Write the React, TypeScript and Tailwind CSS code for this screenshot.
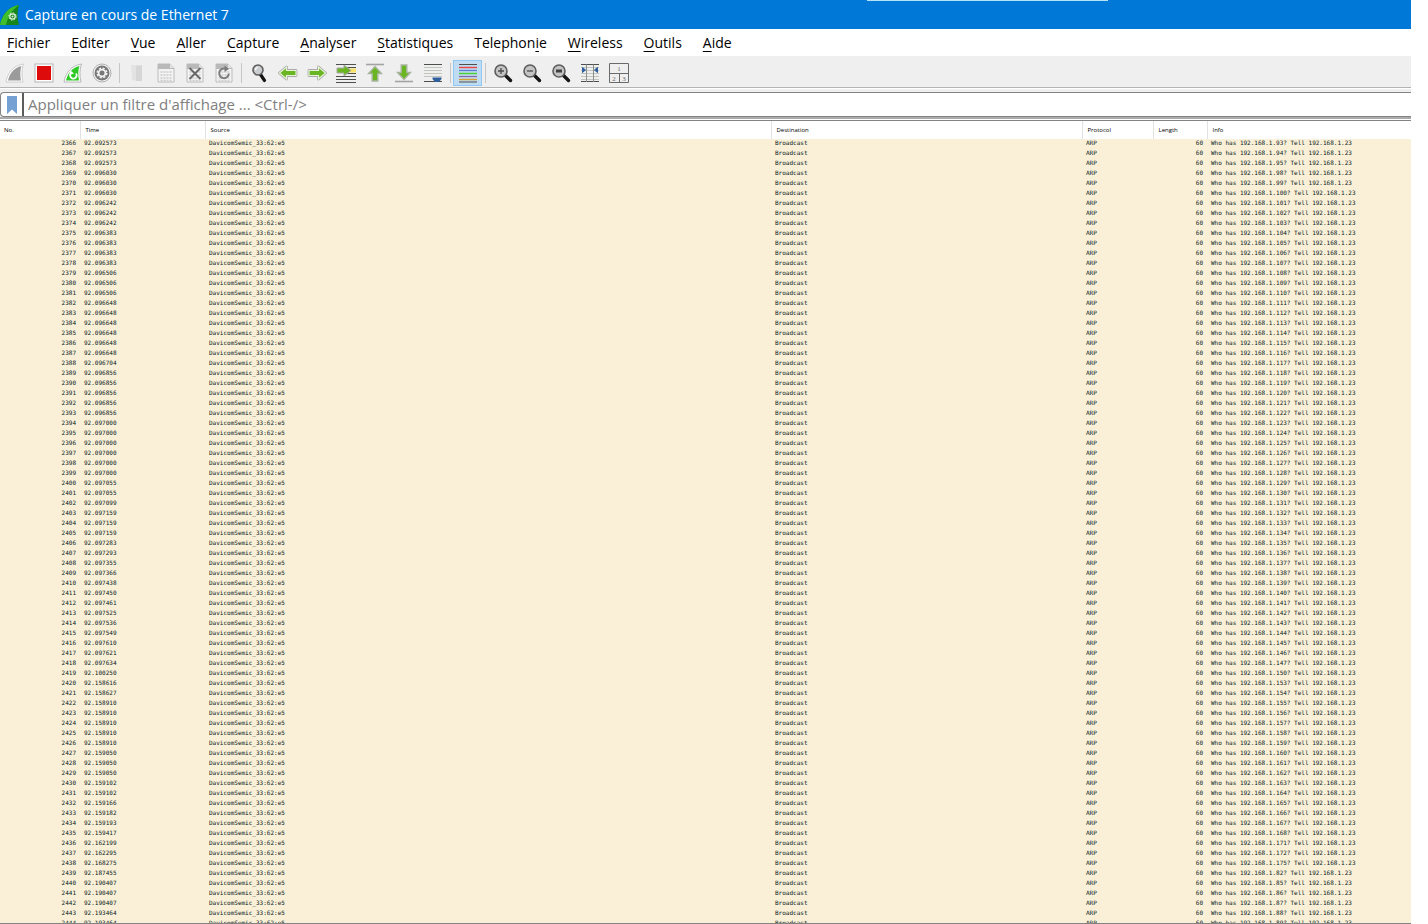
import type { ReactNode } from "react";
import clsx from "clsx";

interface MenuEntry {
  label: string;
  // index of the underlined access key
  key: number;
}

const MENUS: MenuEntry[] = [
  { label: "Fichier", key: 0 },
  { label: "Editer", key: 0 },
  { label: "Vue", key: 0 },
  { label: "Aller", key: 0 },
  { label: "Capture", key: 0 },
  { label: "Analyser", key: 0 },
  { label: "Statistiques", key: 0 },
  { label: "Telephonie", key: 8 },
  { label: "Wireless", key: 0 },
  { label: "Outils", key: 0 },
  { label: "Aide", key: 0 },
];

// [time, number of consecutive packets with that time]
const TIMES: [string, number][] = [
  ["92.092573", 3],
  ["92.096030", 3],
  ["92.096242", 3],
  ["92.096383", 4],
  ["92.096506", 3],
  ["92.096648", 6],
  ["92.096704", 1],
  ["92.096856", 5],
  ["92.097000", 6],
  ["92.097055", 2],
  ["92.097099", 1],
  ["92.097159", 3],
  ["92.097283", 1],
  ["92.097293", 1],
  ["92.097355", 1],
  ["92.097366", 1],
  ["92.097438", 1],
  ["92.097450", 1],
  ["92.097461", 1],
  ["92.097525", 1],
  ["92.097536", 1],
  ["92.097549", 1],
  ["92.097610", 1],
  ["92.097621", 1],
  ["92.097634", 1],
  ["92.100250", 1],
  ["92.158616", 1],
  ["92.158627", 1],
  ["92.158910", 5],
  ["92.159050", 3],
  ["92.159102", 2],
  ["92.159166", 1],
  ["92.159182", 1],
  ["92.159193", 1],
  ["92.159417", 1],
  ["92.162199", 1],
  ["92.162295", 1],
  ["92.168275", 1],
  ["92.187455", 1],
  ["92.190407", 3],
  ["92.193464", 2],
];

// ranges of scanned hosts, first to last
const HOSTS: [number, number][] = [
  [93, 95],
  [98, 147],
  [150, 150],
  [153, 168],
  [171, 172],
  [175, 175],
  [82, 82],
  [85, 89],
];

const times = TIMES.flatMap(([time, count]) => Array<string>(count).fill(time));
const hosts = HOSTS.flatMap(([from, to]) =>
  Array.from({ length: to - from + 1 }, (_, i) => from + i)
);
const packets = times.map((time, i) => ({ no: 2366 + i, time, host: hosts[i] }));

function Icon({ children }: { children: ReactNode }) {
  return (
    <svg viewBox="0 0 20 20" className="size-5" aria-hidden>
      {children}
    </svg>
  );
}

function Fin({ fill, edge }: { fill: string; edge: string }) {
  return (
    <>
      <path d="M1 19C2.500 10 8 2.500 18.500 1C16.500 6 16.500 13 18 19Z" fill="#fff" stroke={edge} strokeWidth="0.8" />
      <path d="M3 17.500C4.500 10.500 9 4.500 16.500 3C15 7 15 13 16 17.500Z" fill={fill} />
    </>
  );
}

function Sheet({ children }: { children: ReactNode }) {
  return (
    <Icon>
      <path d="M2 1H14L18 5V19H2Z" fill="#f3f3f3" stroke="#bcbcbc" />
      <path d="M2 1H14V5H18V6H2Z" fill="#b9b9b9" />
      <path d="M14 1V5H18Z" fill="#e4e4e4" />
      {children}
    </Icon>
  );
}

function SheetDots() {
  return <path d="M4.500 9H16M4.500 12H16M4.500 15H16M4.500 17.500H16" stroke="#cdcdcd" strokeWidth="1.500" strokeDasharray="2 1" />;
}

function Magnifier({ children }: { children?: ReactNode }) {
  return (
    <Icon>
      <path d="M12.500 12.500L17.500 17.500" stroke="#151515" strokeWidth="3.400" strokeLinecap="round" />
      <circle cx="8" cy="8" r="6" fill="#c4c4c4" stroke="#5d5d5d" strokeWidth="1.600" />
      {children}
    </Icon>
  );
}

const ARROW = "M1.500 10L8.500 4V7.500H18V12.500H8.500V16Z";

function Arrow({ turn }: { turn?: string }) {
  return (
    <g transform={turn}>
      <path d={ARROW} fill="#62b01e" stroke="#a9a9a9" strokeWidth="2.800" strokeLinejoin="round" />
      <path d={ARROW} fill="#6ab522" stroke="#e6f3d8" strokeWidth="1.200" />
    </g>
  );
}

function ToolButton({ label, active, children }: { label: string; active?: boolean; children: ReactNode }) {
  return (
    <button
      type="button"
      aria-label={label}
      title={label}
      className={clsx(
        "flex h-[26px] w-[29px] items-center justify-center",
        active && "border border-[#90c8f6] bg-[#c0dcf3]"
      )}
    >
      {children}
    </button>
  );
}

function Separator() {
  return (
    <div className="flex w-[6px] justify-center">
      <div className="h-5 w-px bg-[#c6c6c6]" />
    </div>
  );
}

function TitleBar() {
  return (
    <header className="flex h-[29px] items-center gap-[5px] bg-[#0078d7]">
      <svg viewBox="0 0 20 20" className="size-5" aria-hidden>
        <path d="M0 20C2 10 8 2 19 0C17 6 17 13 19 20Z" fill="#16851a" />
        <path d="M0 20C2 10 8 2 19 0C12 5 8 11 6 20Z" fill="#3fbf2b" />
        <circle cx="12.500" cy="11.500" r="2.700" fill="none" stroke="#e4f5e0" strokeWidth="1.200" />
        <circle cx="12.500" cy="11.500" r="3.700" fill="none" stroke="#e4f5e0" strokeWidth="1" strokeDasharray="1.400 1.500" />
        <circle cx="12.500" cy="11.500" r="1" fill="#e4f5e0" />
      </svg>
      <h1 className="text-[14px] text-white">Capture en cours de Ethernet 7</h1>
    </header>
  );
}

function MenuBar() {
  return (
    <nav className="flex h-[27px] items-center gap-[21px] bg-white pl-[7px]">
      {MENUS.map(({ label, key }) => (
        <button key={label} type="button" className="text-[14px] text-black">
          {label.slice(0, key)}
          <span className="underline underline-offset-3">{label[key]}</span>
          {label.slice(key + 1)}
        </button>
      ))}
    </nav>
  );
}

function ToolBar() {
  return (
    <div className="flex h-8 items-center border-b border-[#b4b4b4] bg-[#efefef] pt-[3px]" role="toolbar">
      <ToolButton label="Démarrer la capture">
        <Icon>
          <Fin fill="#9b9b9b" edge="#c4c4c4" />
        </Icon>
      </ToolButton>
      <ToolButton label="Arrêter la capture">
        <Icon>
          <rect x="1" y="1" width="18" height="18" fill="#fff" stroke="#b5b5b5" />
          <rect x="3" y="3" width="14" height="14" fill="#dd0b0b" />
        </Icon>
      </ToolButton>
      <ToolButton label="Redémarrer la capture">
        <Icon>
          <Fin fill="#2ec926" edge="#a9a9a9" />
          <path d="M7.500 11A3.200 3.200 0 1 0 13 10.500" fill="none" stroke="#fff" strokeWidth="1.700" />
          <path d="M6 12L7.500 7.500L11 10.500Z" fill="#fff" />
        </Icon>
      </ToolButton>
      <ToolButton label="Options de capture">
        <Icon>
          <circle cx="10" cy="10" r="9" fill="#f5f5f5" stroke="#b0b0b0" />
          <circle cx="10" cy="10" r="7.500" fill="#777" />
          <circle cx="10" cy="10" r="4.800" fill="none" stroke="#f2f2f2" strokeWidth="1.500" strokeDasharray="2.200 1.570" />
          <circle cx="10" cy="10" r="3.400" fill="none" stroke="#f2f2f2" strokeWidth="1.800" />
        </Icon>
      </ToolButton>
      <Separator />
      <ToolButton label="Ouvrir">
        <Icon>
          <path d="M4 2H10L15 4V18H10L5 17Z" fill="#e3e3e3" />
          <path d="M9 3L15 2V18H9Z" fill="#d6d6d6" />
        </Icon>
      </ToolButton>
      <ToolButton label="Enregistrer">
        <Sheet>
          <SheetDots />
        </Sheet>
      </ToolButton>
      <ToolButton label="Fermer">
        <Sheet>
          <SheetDots />
          <path d="M4.500 5L15.500 16M15.500 5L4.500 16" stroke="#686868" strokeWidth="2" />
        </Sheet>
      </ToolButton>
      <ToolButton label="Recharger">
        <Sheet>
          <SheetDots />
          <path d="M11.500 5.800A4.800 4.800 0 1 0 14.800 10.500" fill="none" stroke="#7c7c7c" strokeWidth="2" />
          <path d="M10.500 2.500L15 6L10.500 9Z" fill="#7c7c7c" />
        </Sheet>
      </ToolButton>
      <Separator />
      <ToolButton label="Trouver un paquet">
        <Icon>
          <path d="M11.500 11.500L15.500 17.500" stroke="#151515" strokeWidth="3.200" strokeLinecap="round" />
          <circle cx="9" cy="7" r="5" fill="#c9cdd0" stroke="#5d5d5d" strokeWidth="1.600" />
          <path d="M6.500 7A2.500 2.500 0 0 1 9 4.500" fill="none" stroke="#fff" strokeWidth="1.200" />
        </Icon>
      </ToolButton>
      <ToolButton label="Paquet précédent">
        <Icon>
          <Arrow />
        </Icon>
      </ToolButton>
      <ToolButton label="Paquet suivant">
        <Icon>
          <Arrow turn="rotate(180 10 10)" />
        </Icon>
      </ToolButton>
      <ToolButton label="Aller au paquet">
        <Icon>
          <path d="M0 1.500H20M0 13.500H20M0 16.500H20M0 19.500H20" stroke="#4c4f4c" />
          <path d="M11 4.500H20M11 10.500H20" stroke="#4c4f4c" />
          <rect x="12" y="5.500" width="8" height="4" fill="#f7e36a" />
          <path d="M1 5H8V2L15 7.500L8 13V10H1Z" fill="#6ab522" stroke="#a9a9a9" />
        </Icon>
      </ToolButton>
      <ToolButton label="Premier paquet">
        <Icon>
          <path d="M1 1.500H19" stroke="#a3a3a3" strokeWidth="1.600" />
          <path d="M10 3.500L16.500 10.500H12.800V18H7.200V10.500H3.500Z" fill="#6ab522" stroke="#a9b5a0" strokeWidth="1.400" />
        </Icon>
      </ToolButton>
      <ToolButton label="Dernier paquet">
        <Icon>
          <path d="M1 18.500H19" stroke="#a3a3a3" strokeWidth="1.600" />
          <path d="M10 16.500L16.500 9.500H12.800V2H7.200V9.500H3.500Z" fill="#6ab522" stroke="#a9b5a0" strokeWidth="1.400" />
        </Icon>
      </ToolButton>
      <ToolButton label="Défilement automatique">
        <Icon>
          <path d="M1 1.500H19M1 18.500H19" stroke="#4c4f4c" />
          <path d="M1 4.500H19M1 7.500H19M1 10.500H19M1 13.500H19" stroke="#c3c6bd" />
          <path d="M9.500 14.500H18.500V16L16 19H12L9.500 16Z" fill="#2f5f9e" />
        </Icon>
      </ToolButton>
      <Separator />
      <ToolButton label="Colorier les paquets" active>
        <Icon>
          <path d="M1 1.500H19M1 19H19" stroke="#4c4f4c" strokeWidth="1.200" />
          <path d="M1 4.500H19" stroke="#e84848" strokeWidth="1.500" />
          <path d="M1 7.500H19" stroke="#5b7fd0" strokeWidth="1.300" />
          <path d="M1 10.500H19" stroke="#4fcf35" strokeWidth="1.500" />
          <path d="M1 13.500H19" stroke="#8a6aa8" strokeWidth="1.300" />
          <path d="M1 16.500H19" stroke="#d8a030" strokeWidth="1.500" />
        </Icon>
      </ToolButton>
      <Separator />
      <ToolButton label="Zoom avant">
        <Magnifier>
          <path d="M5 8H11M8 5V11" stroke="#4c4c4c" strokeWidth="1.300" />
        </Magnifier>
      </ToolButton>
      <ToolButton label="Zoom arrière">
        <Magnifier>
          <path d="M5 8H11" stroke="#4c4c4c" strokeWidth="1.300" />
        </Magnifier>
      </ToolButton>
      <ToolButton label="Taille normale">
        <Magnifier>
          <rect x="5" y="6.500" width="6" height="3" fill="#3f3f3f" />
        </Magnifier>
      </ToolButton>
      <ToolButton label="Redimensionner les colonnes">
        <Icon>
          <path d="M1 1.500H19M1 18.500H19" stroke="#4c4f4c" />
          <path d="M1 4.500H19M1 7.500H19M1 10.500H19M1 13.500H19M1 16.500H19" stroke="#c3c6bd" />
          <path d="M6.500 1.500V19M13.500 1.500V19" stroke="#8d918d" />
          <path d="M2.500 4.500L5.500 7L2.500 9.500ZM17.500 4.500L14.500 7L17.500 9.500Z" fill="#2f5f9e" stroke="#2f5f9e" />
        </Icon>
      </ToolButton>
      <ToolButton label="Disposition">
        <Icon>
          <path d="M0.500 0.500H19.500V19.500H0.500ZM0.500 10.500H19.500M10.500 10.500V19.500" fill="none" stroke="#6a6a6a" />
          <g fontSize="7" textAnchor="middle" fill="#6a6a6a" className="font-['Liberation_Serif',serif]">
            <text x="10" y="8">1</text>
            <text x="5" y="17.500">2</text>
            <text x="15" y="17.500">3</text>
          </g>
        </Icon>
      </ToolButton>
    </div>
  );
}

function FilterBar() {
  return (
    <div className="border-t border-white bg-[#efefef] pt-[3px]">
      <div className="flex h-[25px] items-stretch rounded-l-sm border-y border-l border-[#838383] bg-white">
        <button type="button" aria-label="Signets" className="flex w-[23px] items-center justify-center border-r-2 border-[#5c5c5c]">
          <svg viewBox="0 0 10 18" className="h-[18px] w-[10px]" aria-hidden>
            <path d="M0 0H10V18L5 13.500L0 18Z" fill="#74a0d4" />
          </svg>
        </button>
        <input
          type="text"
          aria-label="Filtre d'affichage"
          placeholder="Appliquer un filtre d'affichage ... <Ctrl-/>"
          className="min-w-0 flex-1 px-1 text-[15px] text-black outline-none placeholder:text-[#808080]"
        />
      </div>
    </div>
  );
}

function PacketList() {
  return (
    <main className="min-h-0 flex-1 overflow-hidden border-y border-[#838383] bg-white">
      <table className="w-full table-fixed border-collapse">
        <thead className="text-[6px] leading-[17px]">
          <tr className="text-left text-black [&>th]:h-[18px] [&>th]:border-r [&>th]:border-[#e2e2e2] [&>th]:p-0 [&>th]:pl-[5px] [&>th]:font-medium [&>th:first-child]:pl-1 [&>th:last-child]:border-r-0">
            <th className="w-[80px]">No.</th>
            <th className="w-[125px]">Time</th>
            <th className="w-[566px]">Source</th>
            <th className="w-[311px]">Destination</th>
            <th className="w-[71px]">Protocol</th>
            <th className="w-[54px]">Length</th>
            <th>Info</th>
          </tr>
        </thead>
        <tbody className="bg-[#faf0d7] font-['DejaVu_Sans_Mono',monospace] text-[6px] leading-[8px] text-[#06181c]">
          {packets.map(({ no, time, host }) => (
            <tr key={no} className="whitespace-nowrap [&>td]:px-1 [&>td]:pb-[2px]">
              <td className="text-right">{no}</td>
              <td>{time}</td>
              <td>DavicomSemic_33:62:e5</td>
              <td>Broadcast</td>
              <td>ARP</td>
              <td className="text-right">60</td>
              <td>{`Who has 192.168.1.${host}? Tell 192.168.1.23`}</td>
            </tr>
          ))}
        </tbody>
      </table>
    </main>
  );
}

export default function App() {
  return (
    <div className="h-screen bg-white pr-[17px] font-['Open_Sans','Noto_Sans',sans-serif]">
      <div className="relative flex h-full flex-col">
        <TitleBar />
        {/* edge of the window docked above */}
        <div className="absolute top-0 left-[867px] h-px w-[241px] bg-[#b5e3f5]" />
        <MenuBar />
        <ToolBar />
        <FilterBar />
        <div className="h-[3px] border-b border-white bg-[#ababab]" />
        <PacketList />
      </div>
    </div>
  );
}
